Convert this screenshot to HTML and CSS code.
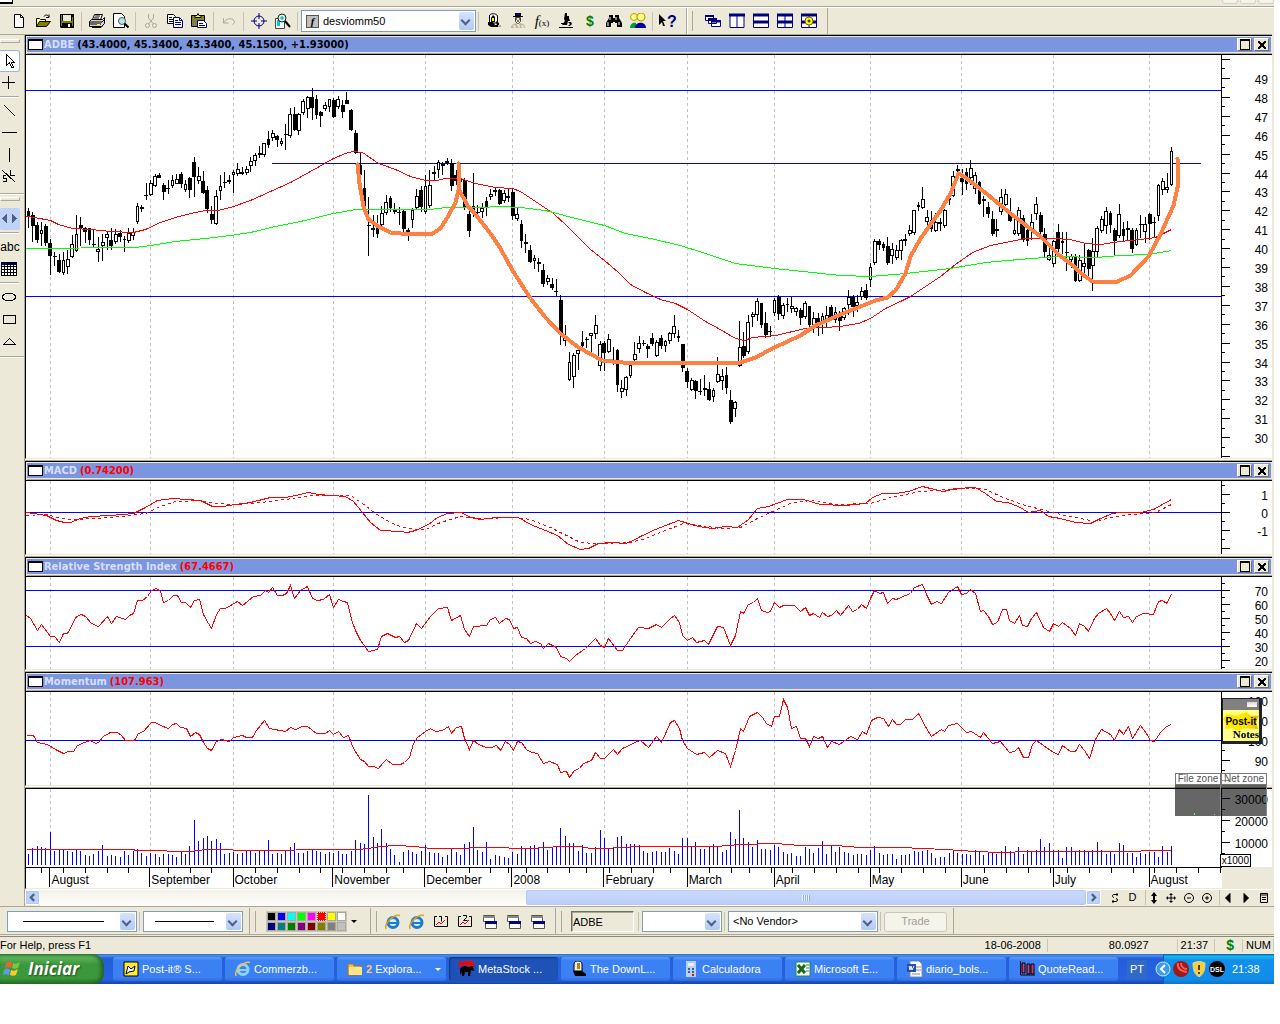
FILE: index.html
```html
<!DOCTYPE html>
<html lang="en">
<head>
    <meta charset="UTF-8">
    <meta name="viewport" content="width=device-width, initial-scale=1.0">
    <title>MetaStock - ADBE</title>
    <link rel="stylesheet" href="styles.css">
</head>
<body>
    <div class="app">
        <div class="menubar">
            <span class="menu-icon"></span>
            <span class="menu-controls"><i></i><i></i><i></i></span>
        </div>

        <header class="toolbar">
            <div class="tools">
                <button class="tool" aria-label="New"><svg viewBox="0 0 16 16"><path d="M3.5 1.5h6l3 3v10h-9z" fill="#fff" stroke="#000"/><path d="M9.5 1.5v3h3" fill="none" stroke="#000"/></svg></button>
                <button class="tool" aria-label="Open"><svg viewBox="0 0 16 16"><path d="M1.5 13.5v-8h3l1 1h5v2" fill="#ffff80" stroke="#000"/><path d="M1.5 13.5l3-5h11l-4 5z" fill="#808000" stroke="#000"/><path d="M9 3.5c1-2 4-2 5 .5m0-2.5v3h-3" fill="none" stroke="#000"/></svg></button>
                <button class="tool" aria-label="Save"><svg viewBox="0 0 16 16"><path d="M1 1h14v14H2l-1-1z"/><path d="M2 2h1v11H2zM13 4h1v9h-1z" fill="#808000"/><path d="M4 2h8v6H4z" fill="#ece9d8"/><path d="M3 8h10v2H3z" fill="#808000"/><path d="M9 11h2v3H9z" fill="#fff"/></svg></button>
                <span class="sep"></span>
                <button class="tool" aria-label="Print"><svg viewBox="0 0 16 16"><path d="M5.5 1.5h8l-2 5h-8z" fill="#fff" stroke="#000"/><path d="M6 3h5M5 5h5" stroke="#000"/><path d="M.5 8.5l2-2h11l2-2v6l-3 3H.5z" fill="#d4d0c8" stroke="#000"/><path d="M1 9h12l2-2M1 11h11M3 14.5h9l2-2" fill="none" stroke="#000"/><path d="M8 11h3v1H8z" fill="#ff0"/></svg></button>
                <button class="tool" aria-label="Print preview"><svg viewBox="0 0 16 16"><path d="M.5.5h8l3 3v11h-11z" fill="#fff" stroke="#000"/><circle cx="9" cy="8" r="3.5" fill="#b0e8e8" stroke="#555"/><path d="M11.5 10.5l4 4" stroke="#000" stroke-width="2"/></svg></button>
                <span class="sep"></span>
                <button class="tool" aria-label="Cut" disabled><svg viewBox="0 0 16 16" fill="none" stroke="#aca899"><path d="M5.5 1v4l5 6M10.5 1v4l-5 6"/><circle cx="4.5" cy="12.5" r="2"/><circle cx="11.5" cy="12.5" r="2"/></svg></button>
                <button class="tool" aria-label="Copy"><svg viewBox="0 0 16 16"><path d="M.5 1.5h6l2 2v7h-8z" fill="#fff" stroke="#000"/><path d="M2 4.5h3M2 6.5h4M2 8.5h4" stroke="#000"/><path d="M6.5 4.5h6l3 3v7h-9z" fill="#fff" stroke="#000080"/><path d="M8 7.5h3M8 9.5h6M8 11.5h6M12.5 5v2.5H15" fill="none" stroke="#000080"/></svg></button>
                <button class="tool" aria-label="Paste"><svg viewBox="0 0 16 16"><path d="M.5 2.5h13v11H.5z" fill="#808040" stroke="#000"/><path d="M4 4.5v-2h2l1-2 1 2h2v2z" fill="#ff0" stroke="#000"/><path d="M6.5 7.5h6l3 3v4h-9z" fill="#fff" stroke="#000080"/><path d="M8 10.5h4M8 12.5h6" stroke="#000080"/></svg></button>
                <span class="sep"></span>
                <button class="tool" aria-label="Undo" disabled><svg viewBox="0 0 16 16" fill="none" stroke="#aca899"><path d="M2.5 5v5h5M3 9.5c2-4 7-5 10-2 1 2 0 3-1.500 4"/></svg></button>
                <span class="sep"></span>
                <button class="tool" aria-label="Crosshair"><svg viewBox="0 0 16 16" fill="none"><circle cx="8" cy="8" r="5" stroke="#000080"/><path d="M8 0v6M8 10v6M0 8h6M10 8h6" stroke="#000080"/></svg></button>
                <button class="tool" aria-label="Zoom"><svg viewBox="0 0 16 16"><path d="M.5 5.5h9v10h-9z" fill="#fff" stroke="#444"/><path d="M2 7h3v6H2z" fill="#0cc"/><circle cx="7" cy="5" r="4" fill="#d0f4f4" stroke="#222"/><path d="M5 5h4M7 3v4" stroke="#0aa"/><path d="M10 8l5 6" stroke="#000" stroke-width="2"/></svg></button>
                <span class="sep"></span>
                <label class="combo indicator">
                    <span class="fx">f</span>
                    <select aria-label="Indicator"><option>desviomm50</option></select>
                </label>
                <span class="sep"></span>
                <button class="tool" aria-label="Downloader"><svg viewBox="0 0 16 16"><path d="M3.5 10V3c0-3 7-3 8 0v7z" fill="#fff" stroke="#000"/><path d="M7 2l2 2v5H5V5z"/><path d="M6 5h2v3H6z" fill="#ff0"/><path d="M2 9h5l2 3h4v2H5l-3-2z"/><path d="M10 8l3 2v3h-2z"/><path d="M12 12h3v2h-3z" fill="#aca899"/></svg></button>
                <button class="tool" aria-label="Expert advisor"><svg viewBox="0 0 16 16"><path d="M5 0h6v3h2v1H3V3h2z"/><path d="M6 1h4v1H6z" fill="#00a"/><path d="M5.5 4.5h5v4l-2 2h-1l-2-2z" fill="#ffe8b0" stroke="#444"/><path d="M6 6h1M9 6h1M7 8h2" stroke="#000"/><path d="M1 15c0-4 3-4 5-5l2 2 2-2c3 1 5 1 5 5z" fill="#bbb79f"/><path d="M3 13h2v2M11 13h2v2M7 12h2v3" fill="none" stroke="#fff"/></svg></button>
                <button class="tool formula" aria-label="Indicator builder"><i>f</i><small>(x)</small></button>
                <button class="tool" aria-label="Explorer"><svg viewBox="0 0 16 16"><path d="M7 0h2v3h2v2l1 3h-2l-1 4H4l3-4-1-2z"/><path d="M3 10h6v1H3zM1 14h14v1H1zM10 9h3l1 2-2 2h-2l2-2z"/></svg></button>
                <button class="tool dollar" aria-label="Quotes">$</button>
                <button class="tool" aria-label="Find"><svg viewBox="0 0 16 16"><path d="M3 2h4v3h2V2h4v3l3 5v4h-5v-4H9V9H7v1H5v4H0v-4l3-5z"/><path d="M4 4v3M2 9v4M10 4v3M13 9v3" stroke="#fff"/></svg></button>
                <button class="tool" aria-label="Community"><svg viewBox="0 0 16 16"><circle cx="4" cy="4" r="3.5" fill="#ffff80" stroke="#b0a000"/><circle cx="11" cy="4" r="4" fill="#ffff80" stroke="#b0a000"/><path d="M0 15c0-5 4-6 6-5v5z" fill="#00a030"/><path d="M5 15c0-7 11-7 11 0z" fill="#0000a0"/></svg></button>
                <span class="sep"></span>
                <button class="tool help" aria-label="Context help"><svg viewBox="0 0 8 16"><path d="M0 1l7 7H4l2 5H4L3 9l-3 3z"/></svg>?</button>
            </div>
            <div class="tools windows">
                <button class="tool" aria-label="Cascade"><svg viewBox="0 0 16 16" fill="#fff" stroke="#000080"><path d="M.5 2.5h8v5h-8zM3.5 5.5h8v5h-8zM6.5 7.5h9v6h-9z"/><path d="M0 3h9M3 6h9M6 8.500h10" stroke-width="2"/></svg></button>
                <button class="tool" aria-label="Tile columns"><svg viewBox="0 0 16 16" fill="#fff" stroke="#000080"><path d="M1 1.5h14v13H1zM8 2v12"/><path d="M0 2h16" stroke-width="3"/></svg></button>
                <button class="tool" aria-label="Tile rows"><svg viewBox="0 0 16 16" fill="#fff" stroke="#000080"><path d="M.5 1.5h15v13H.5z"/><path d="M0 2h16M0 9h16" stroke-width="3"/></svg></button>
                <button class="tool" aria-label="Tile grid"><svg viewBox="0 0 16 16" fill="#fff" stroke="#000080"><path d="M.5 1.5h15v13H.5zM8 2v12"/><path d="M0 2h16M0 9h16" stroke-width="3"/></svg></button>
                <button class="tool" aria-label="Layout settings"><svg viewBox="0 0 16 16" fill="#fff" stroke="#000080"><path d="M.5 1.5h15v13H.5zM8 2v12"/><path d="M0 2h16M0 9h16" stroke-width="3"/><circle cx="8" cy="8" r="4" fill="#ff0" stroke="#806000"/><circle cx="8" cy="8" r="1" fill="#fff" stroke="#000"/></svg></button>
            </div>
        </header>

        <div class="workspace">
            <aside class="palette">
                <span class="palette-grip"></span>
                <button class="draw active" aria-label="Pointer"><svg viewBox="0 0 20 20"><path d="M6.5 3.5v11l3-3 2 5h2l-2-5h3z" fill="#fff" stroke="#000"/></svg></button>
                <button class="draw" aria-label="Crosshair"><svg viewBox="0 0 20 20"><path d="M2 9.5h13M8.500 3v13"/></svg></button>
                <hr>
                <button class="draw" aria-label="Trendline"><svg viewBox="0 0 20 20"><path d="M4 4l11 11"/></svg></button>
                <button class="draw" aria-label="Horizontal line"><svg viewBox="0 0 20 20"><path d="M2 9.5h15"/></svg></button>
                <button class="draw" aria-label="Vertical line"><svg viewBox="0 0 20 20"><path d="M9.5 3v14"/></svg></button>
                <button class="draw" aria-label="Speed lines"><svg viewBox="0 0 20 20"><path d="M2 3l13 12M10.5 3v5h4M6 8.5H3.500v3h3v3H3"/></svg></button>
                <hr class="wide">
                <span class="palette-grip"></span>
                <button class="draw scroll-mode" aria-label="Scroll"><svg viewBox="0 0 20 20"><path d="M7 5v9L2 9.500zM12 5v9l5-4.500z" fill="#4d6185" stroke="none"/></svg></button>
                <hr>
                <button class="draw" aria-label="Text">abc</button>
                <button class="draw" aria-label="Grid"><svg viewBox="0 0 20 20"><path d="M1.5 3.5h15v13h-15z" fill="#fff"/><path d="M1 4.5h16" stroke="#000080" stroke-width="2"/><path d="M4.5 4v13M7.5 4v13M10.5 4v13M13.5 4v13M1 7.5h16M1 10.5h16M1 13.5h16"/></svg></button>
                <hr>
                <button class="draw" aria-label="Ellipse"><svg viewBox="0 0 20 20"><ellipse cx="9" cy="10" rx="6.5" ry="4"/></svg></button>
                <button class="draw" aria-label="Rectangle"><svg viewBox="0 0 20 20"><path d="M3.5 6.5h12v8h-12z"/></svg></button>
                <button class="draw" aria-label="Triangle"><svg viewBox="0 0 20 20"><path d="M3.5 13.5l6-6 6 6z"/></svg></button>
                <hr class="wide last">
            </aside>

            <main class="charts">
                <section class="panel">
                    <h2 class="panel-title"><span class="win-icon"></span><span>ADBE</span><b class="ohlc">(43.4000, 45.3400, 43.3400, 45.1500, +1.93000)</b><button class="max" aria-label="Maximize"></button><button class="close" aria-label="Close"></button></h2>
                    <div class="panel-body price">
                        <svg class="plot" id="price-plot" viewBox="26 55 1195 403" preserveAspectRatio="none"></svg>
                        <svg class="axis" id="price-axis" viewBox="1221 55 51 403"></svg>
                    </div>
                </section>
                <section class="panel">
                    <h2 class="panel-title"><span class="win-icon"></span><span>MACD</span><b>(0.74200)</b><button class="max" aria-label="Maximize"></button><button class="close" aria-label="Close"></button></h2>
                    <div class="panel-body macd">
                        <svg class="plot" id="macd-plot" viewBox="26 481 1195 73" preserveAspectRatio="none"></svg>
                        <svg class="axis" id="macd-axis" viewBox="1221 481 51 73"></svg>
                    </div>
                </section>
                <section class="panel">
                    <h2 class="panel-title"><span class="win-icon"></span><span>Relative Strength Index</span><b>(67.4667)</b><button class="max" aria-label="Maximize"></button><button class="close" aria-label="Close"></button></h2>
                    <div class="panel-body rsi">
                        <svg class="plot" id="rsi-plot" viewBox="26 577 1195 92" preserveAspectRatio="none"></svg>
                        <svg class="axis" id="rsi-axis" viewBox="1221 577 51 92"></svg>
                    </div>
                </section>
                <section class="panel">
                    <h2 class="panel-title"><span class="win-icon"></span><span>Momentum</span><b>(107.963)</b><button class="max" aria-label="Maximize"></button><button class="close" aria-label="Close"></button></h2>
                    <div class="panel-body momentum">
                        <svg class="plot" id="mom-plot" viewBox="26 692 1195 93" preserveAspectRatio="none"></svg>
                        <svg class="axis" id="mom-axis" viewBox="1221 692 51 93"></svg>
                    </div>
                </section>
                <section class="panel untitled">
                    <div class="panel-body volume">
                        <svg class="plot" id="vol-plot" viewBox="26 789 1195 78" preserveAspectRatio="none"></svg>
                        <svg class="axis" id="vol-axis" viewBox="1221 789 51 78"></svg>
                        <span class="multiplier">x1000</span>
                    </div>
                </section>
                <div class="dates">
                    <svg class="date-ticks" id="date-ticks" viewBox="26 868 1195 5" preserveAspectRatio="none"></svg>
                    <div class="months" id="months"></div>
                </div>
                <div class="scroll-row">
                    <button class="arrow" aria-label="Scroll left"><svg viewBox="0 0 8 8"><path d="M5.5 1l-3 3 3 3"/></svg></button>
                    <div class="track"><div class="thumb"><i></i></div></div>
                    <button class="arrow" aria-label="Scroll right"><svg viewBox="0 0 8 8"><path d="M2.5 1l3 3-3 3"/></svg></button>
                    <div class="chart-tools">
                        <button class="mini" aria-label="Refresh"><svg viewBox="0 0 12 12"><path d="M9 2.5H5c-2 0-2 3 0 3M3 9.5h4c2 0 2-3 0-3M8 1v3M4 8v3"/></svg></button>
                        <button class="mini" aria-label="Daily">D</button>
                        <button class="mini split" aria-label="Fit vertically"><svg viewBox="0 0 12 12"><path d="M6 0l3 4H7v4h2l-3 4-3-4h2V4H3z" fill="#000" stroke="none"/></svg></button>
                        <button class="mini" aria-label="Move"><svg viewBox="0 0 12 12"><path d="M6 1v10M1 6h10M4.5 2.5h3M4.5 9.5h3M2.5 4.5v3M9.5 4.5v3"/></svg></button>
                        <button class="mini" aria-label="Zoom out"><svg viewBox="0 0 12 12"><circle cx="6" cy="6" r="4.5"/><path d="M4 6h4"/></svg></button>
                        <button class="mini" aria-label="Zoom in"><svg viewBox="0 0 12 12"><circle cx="6" cy="6" r="4.5"/><path d="M4 6h4M6 4v4"/></svg></button>
                        <button class="mini split" aria-label="Previous"><svg viewBox="0 0 12 12"><path d="M8 1.5v9L3.5 6z" fill="#000"/></svg></button>
                        <button class="mini" aria-label="Next"><svg viewBox="0 0 12 12"><path d="M4 1.5v9L8.500 6z" fill="#000"/></svg></button>
                        <button class="mini" aria-label="Properties"><svg viewBox="0 0 12 12"><path d="M2.5 1.5h7v9h-7zM2 3h8M4 5.5h4M4 7.5h4"/></svg></button>
                    </div>
                </div>
            </main>

            <div class="postit"><span class="postit-bar"></span><span class="postit-logo">Post-it</span><em>Notes</em></div>
            <div class="zones"><span>File zone</span><span>Net zone</span><div class="traffic"></div><div></div></div>
        </div>

        <div class="toolbar bottom">
            <label class="combo style-combo"><select aria-label="Line style"><option></option></select></label>
            <span class="sep"></span>
            <label class="combo weight-combo"><select aria-label="Line weight"><option></option></select></label>
            <div class="group colors">
                <div class="swatches" id="swatches"></div>
                <button class="more" aria-label="More colors"></button>
            </div>
            <div class="group links">
                <button class="tool" aria-label="Web"><svg viewBox="0 0 16 16"><circle cx="8" cy="8.5" r="5" fill="#d8ecfc" stroke="#1c7cd0" stroke-width="3"/><path d="M4 9h10" stroke="#1c7cd0" stroke-width="2"/><path d="M1 15C-1 10 8 0 15 1.5" fill="none" stroke="#e0a020" stroke-width="1.5"/></svg></button>
                <button class="tool" aria-label="Web research"><svg viewBox="0 0 16 16"><circle cx="8" cy="8.5" r="5" fill="#d8ecfc" stroke="#1c7cd0" stroke-width="3"/><path d="M4 9h10" stroke="#1c7cd0" stroke-width="2"/><path d="M1 15C-1 10 8 0 15 1.5" fill="none" stroke="#e0a020" stroke-width="1.5"/></svg></button>
                <button class="tool" aria-label="Chart 1"><svg viewBox="0 0 16 16" fill="none" stroke="#000"><path d="M4 2.5H1.5v10h13v-10H12"/><path d="M3 11l3-3 2 2 4-4" stroke="red"/><path d="M6 2.5h2.500v5"/></svg></button>
                <button class="tool" aria-label="Chart 2"><svg viewBox="0 0 16 16" fill="none" stroke="#000"><path d="M4 2.5H1.5v10h13v-10H12"/><path d="M3 11l3-3 2 2 4-4" stroke="red"/><path d="M6 1.5h3.5v2l-3 3h4"/></svg></button>
                <button class="tool" aria-label="Window 1"><svg viewBox="0 0 16 16"><path d="M2.5 1.5h11v6h-11zM4.5 7.5h11v7h-11z" fill="#fff" stroke="#555"/><path d="M2 2h12v2H2z" fill="#888"/><path d="M4 7h12v3H4z" fill="#000080"/></svg></button>
                <button class="tool" aria-label="Window 2"><svg viewBox="0 0 16 16"><path d="M2.5 1.5h11v6h-11zM4.5 7.5h11v7h-11z" fill="#fff" stroke="#555"/><path d="M2 2h12v2H2z" fill="#888"/><path d="M4 7h12v3H4z" fill="#000080"/></svg></button>
                <button class="tool" aria-label="Window 3"><svg viewBox="0 0 16 16"><path d="M2.5 1.5h11v6h-11zM4.5 7.5h11v7h-11z" fill="#fff" stroke="#555"/><path d="M2 2h12v2H2z" fill="#888"/><path d="M4 7h12v3H4z" fill="#000080"/></svg></button>
            </div>
            <div class="group trading">
                <input class="symbol" type="text" value="ADBE" aria-label="Symbol">
                <span class="sep"></span>
                <label class="combo account"><select aria-label="Account"><option></option></select></label>
                <span class="sep"></span>
                <label class="combo vendor"><select aria-label="Vendor"><option>&lt;No Vendor&gt;</option></select></label>
                <span class="sep"></span>
                <button class="trade" disabled>Trade</button>
            </div>
        </div>

        <footer class="status">
            <span class="hint">For Help, press F1</span>
            <span class="date">18-06-2008</span>
            <span class="value">80.0927</span>
            <span class="time">21:37</span>
            <span class="cash">$</span>
            <span class="num">NUM</span>
        </footer>

        <nav class="taskbar">
            <button class="start"><svg viewBox="0 0 20 20"><path d="M3 4c2-2 4-2 6 0L8 9C6 8 4 8 2 9z" fill="#f0602c"/><path d="M10 4c2 1 4 1 7-1l-2 6c-2 1-4 1-6 0z" fill="#7cc83c"/><path d="M1 11c2-2 4-2 6 0l-1 5c-2-1-4-1-6 0z" fill="#5c9cf0"/><path d="M8 11c2 1 4 1 7-1l-2 6c-2 1-4 1-6 0z" fill="#fcc82c"/></svg>Iniciar</button>
            <div class="tasks">
                <a href="#"><svg viewBox="0 0 16 16"><path d="M1 1h14v14H1z" fill="#fe3" stroke="#000"/><path d="M3 13l2-8 3 3 4-3-1 5-5 1z" fill="#fff" stroke="#000"/></svg>Post-it® S...</a>
                <a href="#"><svg viewBox="0 0 16 16"><circle cx="8" cy="8.5" r="5" fill="none" stroke="#8cd4ff" stroke-width="3"/><path d="M4 9h10" stroke="#8cd4ff" stroke-width="2"/><path d="M1 15C-1 10 8 0 15 1.5" fill="none" stroke="#f4c040" stroke-width="1.5"/></svg>Commerzb...</a>
                <a href="#" class="grouped"><svg viewBox="0 0 16 16"><path d="M1 3h5l1 2h7v9H1z" fill="#f0c050" stroke="#a07820"/><path d="M2 6h13v8H2z" fill="#ffe48a"/></svg><b>2</b> Explora...</a>
                <a href="#" class="current"><svg viewBox="0 0 16 16"><path d="M1 6V0l3 4 3-4v6M14 1H9v2h5v3H9" fill="none" stroke="red" stroke-width="2"/><path d="M1 8c3-4 6-3 8-2l5-1 1 5-3-1-1 6h-2v-4H6l-1 4H3v-4l-2 3z"/></svg>MetaStock ...</a>
                <a href="#"><svg viewBox="0 0 16 16"><path d="M3 10V3c0-4 8-4 8 0v7z" fill="#eee" stroke="#000"/><path d="M6 2h3v6H6z" fill="#a80"/><path d="M2 10h9l4 3v2H4z"/></svg>The DownL...</a>
                <a href="#"><svg viewBox="0 0 16 16"><path d="M3 0h10v16H3z" fill="#b8d0f0"/><path d="M5 2h6v3H5z" fill="#eef"/><path d="M5 7h2v2H5zM9 7h2v2H9zM5 10h2v2H5zM9 10h2v2H9z" fill="#3060a0"/><path d="M9 13h2v2H9z" fill="red"/></svg>Calculadora</a>
                <a href="#"><svg viewBox="0 0 16 16"><path d="M1 1h14v14H1z" fill="#fff" stroke="#284"/><path d="M3 4l7 8M10 4l-7 8" stroke="#186818" stroke-width="3"/><path d="M11 4h3M11 7h3M11 10h3" stroke="#284"/></svg>Microsoft E...</a>
                <a href="#"><svg viewBox="0 0 16 16"><path d="M3 0h9l3 3v13H3z" fill="#fff" stroke="#88a"/><path d="M8 6h6M8 9h6M5 13h8" stroke="#88a"/><path d="M0 3h9v8H0z" fill="#2050a8"/><path d="M2 5l1 4 1-4 1 4 2-4" fill="none" stroke="#fff"/></svg>diario_bols...</a>
                <a href="#"><svg viewBox="0 0 16 16"><path d="M1.5 0v14H16" fill="none" stroke="#000"/><path d="M3 2h3v10H3zM8 3h3v10H8zM12 3h3v10h-3z" fill="#c04080" stroke="#000"/></svg>QuoteRead...</a>
            </div>
            <span class="lang">PT</span>
            <div class="tray">
                <button class="expand" aria-label="Show hidden icons"><svg viewBox="0 0 16 16"><circle cx="8" cy="8" r="7" fill="#3a9cf0" stroke="#cfe6fc"/><path d="M10 4L6 8l4 4" fill="none" stroke="#fff" stroke-width="2"/></svg></button>
                <svg viewBox="0 0 16 16"><circle cx="8" cy="8" r="8" fill="#a01818"/><path d="M5 2c-1 5 2 8 9 9M8 2c0 3 2 6 6 6" fill="none" stroke="#f06050" stroke-width="2"/></svg>
                <svg viewBox="0 0 16 16"><path d="M8 0l6 2c0 6-1 11-6 14C3 13 2 8 2 2z" fill="#fcd030" stroke="#d8d0b0"/><path d="M8 4v5M8 11v2" stroke="#443" stroke-width="2"/></svg>
                <svg class="dsl" viewBox="0 0 16 16"><circle cx="8" cy="8" r="8"/><text x="8" y="11">DSL</text></svg>
                <time>21:38</time>
            </div>
        </nav>
    </div>
    <script src="charts.js"></script>
</body>
</html>
```

FILE: styles.css
```css
* {
    box-sizing: border-box;
}

body {
    margin: 0;
    background: #fff;
    font-family: "Liberation Sans", Arial, sans-serif;
    font-size: 11px;
    line-height: 13px;
    color: #000;
}

button, input, select {
    font: inherit;
    color: inherit;
    padding: 0;
    margin: 0;
    border: 0;
    background: none;
}

.app {
    margin-right: 6px;
    background: #ece9d8;
}

/* menu bar */
.menubar {
    height: 7px;
    display: flex;
    justify-content: space-between;
    align-items: flex-start;
    border-bottom: 1px solid #aca899;
}

.menu-icon {
    width: 13px;
    height: 4px;
    background: #fff;
    border: 1px solid #000;
    border-width: 0 1px 2px 0;
}

.menu-controls {
    display: flex;
    gap: 2px;
}

.menu-controls i {
    width: 16px;
    height: 4px;
    background: #f5f4ea;
    border: 1px solid #d6d2c2;
    border-top: 0;
    border-radius: 0 0 3px 3px;
}

/* toolbars */
.toolbar {
    display: flex;
    height: 27px;
    border-top: 1px solid #fff;
}

.tools {
    display: flex;
    align-items: center;
    padding: 0 6px 0 7px;
    border-right: 1px solid #aca899;
}

.windows {
    border-left: 1px solid #fff;
    padding-left: 13px;
    background: linear-gradient(#aca899, #aca899) 4px 3px / 1px 20px no-repeat;
}

.tool {
    width: 24px;
    height: 22px;
    display: flex;
    align-items: center;
    justify-content: center;
}

.tool svg {
    width: 16px;
    height: 16px;
}

.sep {
    width: 6px;
    height: 19px;
    background: linear-gradient(#c5c2b2, #c5c2b2) 2px 0 / 1px 100% no-repeat;
}

.formula {
    font-family: "Liberation Serif", serif;
    font-size: 15px;
}

.formula small {
    font-size: 9px;
    padding-top: 4px;
}

.dollar {
    color: #008000;
    font-weight: bold;
    font-size: 14px;
}

.tool.help {
    color: #000080;
    font-weight: bold;
    font-size: 16px;
}

.help svg {
    width: 8px;
}

.combo {
    position: relative;
    display: flex;
    align-items: center;
    height: 22px;
    background: #fff;
    border: 1px solid #7f9db9;
}

.combo select {
    appearance: none;
    flex: 1;
    min-width: 0;
    height: 100%;
    padding: 0 18px 0 4px;
    outline: 0;
}

.combo::after {
    content: "";
    position: absolute;
    right: 1px;
    top: 1px;
    bottom: 1px;
    width: 15px;
    border-radius: 2px;
    background: linear-gradient(#d6e3fe, #b4c8f6);
    pointer-events: none;
}

.combo::before {
    content: "";
    position: absolute;
    z-index: 1;
    right: 6px;
    top: 6px;
    width: 5px;
    height: 5px;
    border: solid #4d6185;
    border-width: 0 2px 2px 0;
    transform: rotate(45deg);
    pointer-events: none;
}

.indicator {
    width: 175px;
    padding-left: 4px;
}

.fx {
    width: 13px;
    height: 13px;
    border: 1px solid #555;
    background: #c0c0c0;
    font: italic bold 11px/11px "Liberation Serif", serif;
    text-align: center;
}

/* workspace */
.workspace {
    position: relative;
    display: flex;
}

.palette {
    width: 24px;
    display: flex;
    flex-direction: column;
    padding-top: 4px;
    border-top: 1px solid #aca899;
}

.palette-grip {
    width: 20px;
    height: 4px;
    margin-bottom: 7px;
    border: 1px solid #fff;
    border-color: #fff #aca899 #aca899 #fff;
}

.palette hr {
    width: 19px;
    margin: 2px 0;
    border: 0;
    border-top: 1px solid #aca899;
    border-bottom: 1px solid #fff;
}

.palette .wide {
    width: 24px;
    margin: 5px 0 2px;
}

.palette .last {
    margin-top: 4px;
}

.draw {
    width: 20px;
    height: 22px;
    font-size: 12px;
}

.draw svg {
    display: block;
    width: 20px;
    height: 20px;
    fill: none;
    stroke: #000;
    shape-rendering: crispEdges;
}

.draw.active {
    background: #fff;
    border: 1px solid #98b5e2;
    border-left: 0;
    border-radius: 0 3px 3px 0;
}

.draw.scroll-mode {
    background: #c1d2f8;
    border-radius: 2px;
}

.charts {
    flex: 1;
    min-width: 0;
    border-left: 1px solid #aca899;
    padding-right: 2px;
}

.panel {
    border-top: 1px solid #aca899;
    border-bottom: 1px solid #fff;
}

.panel-title {
    display: flex;
    align-items: center;
    height: 20px;
    margin: 0;
    padding: 0 3px 1px 2px;
    border: 1px solid #000;
    border-right: 0;
    background: #7b96df;
    box-shadow: inset 0 1px #ece9d8, inset 1px 0 #ece9d8, inset 0 -1px #aca899, inset 0 -2px #ece9d8, inset -1px 0 #ece9d8;
    font: bold 11px/14px "DejaVu Sans Condensed", "Liberation Sans", sans-serif;
    color: #d6dff7;
}

.panel-title b {
    flex: 1;
    margin-left: 3px;
    color: #f00;
}

.panel-title .ohlc {
    color: #000;
}

.win-icon {
    width: 15px;
    height: 11px;
    margin-right: 1px;
    background: #fff;
    border: 1px solid #000;
    border-top-width: 2px;
}

.max, .close {
    width: 15px;
    height: 13px;
    margin-left: 2px;
    background: #ece9d8;
    border: 1px solid;
    border-color: #fff #716f64 #716f64 #fff;
}

.max {
    display: flex;
    justify-content: center;
    align-items: center;
}

.max::after {
    content: "";
    width: 8px;
    height: 8px;
    border: 1px solid #000;
    border-top-width: 2px;
}

.close {
    background:
        linear-gradient(45deg, transparent 42%, #000 42%, #000 58%, transparent 58%) center / 8px 8px no-repeat,
        linear-gradient(-45deg, transparent 42%, #000 42%, #000 58%, transparent 58%) center / 8px 8px no-repeat,
        #ece9d8;
}

.panel-body {
    position: relative;
    display: flex;
    box-sizing: content-box;
    border-left: 1px solid #000;
    border-bottom: 1px solid #ece9d8;
    background: #fff;
}

.price { height: 403px; }
.macd { height: 73px; }
.rsi { height: 92px; }
.momentum { height: 93px; }
.volume { height: 78px; }

.panel.untitled {
    border-bottom: 0;
}

.volume {
    border-top: 1px solid #000;
    border-bottom: 0;
}

.plot {
    flex: 1;
    min-width: 0;
    height: 100%;
    shape-rendering: crispEdges;
}

.axis {
    width: 51px;
    height: 100%;
    shape-rendering: crispEdges;
    font-size: 12px;
    text-anchor: end;
}

.multiplier {
    position: absolute;
    right: 21px;
    bottom: 0;
    padding: 0 1px;
    border: 1px solid #000;
    background: #fff;
    font-size: 10px;
    line-height: 11px;
}

.dates {
    height: 22px;
    margin-right: 50px;
    border-left: 1px solid #000;
    border-top: 1px solid #000;
    border-bottom: 1px solid #ece9d8;
    background: #fff;
}

.date-ticks {
    display: block;
    width: 100%;
    height: 5px;
    margin-bottom: -5px;
    shape-rendering: crispEdges;
}

.months {
    display: flex;
    padding-right: 1px;
}

.months span {
    flex-basis: 0;
    min-width: 0;
    height: 19px;
    padding: 5px 0 0 1px;
    border-left: 1px solid #000;
    font-size: 12px;
    line-height: 14px;
    white-space: nowrap;
}

.months span:first-child {
    padding-left: 0;
    border-left: 0;
}

.scroll-row {
    display: flex;
    height: 17px;
    border-top: 1px solid #fff;
}

.arrow {
    width: 15px;
    height: 15px;
    border: 1px solid #fff;
    border-radius: 2px;
    background: #c1d2f8;
    box-shadow: inset 0 0 0 1px #b4c8f6;
}

.arrow svg {
    display: block;
    width: 9px;
    height: 9px;
    margin: 0 auto;
    fill: none;
    stroke: #4d6185;
    stroke-width: 2;
}

.track {
    flex: 1;
    display: flex;
    justify-content: flex-end;
    height: 16px;
    background: linear-gradient(#f3f1ec, #fefefb);
}

.thumb {
    width: 53.5%;
    height: 15px;
    display: flex;
    align-items: center;
    justify-content: center;
    border: 1px solid #b4c8f6;
    border-radius: 2px;
    background: linear-gradient(#c9d8fc, #bccefa);
}

.thumb i {
    width: 8px;
    height: 6px;
    background: repeating-linear-gradient(90deg, #eef4fe 0 1px, #8cb0f8 1px 2px);
}

.chart-tools {
    display: flex;
    padding-left: 5px;
    width: 171px;
    justify-content: space-between;
}

.mini {
    width: 17px;
    height: 15px;
    font-size: 11px;
}

.mini svg {
    display: block;
    width: 12px;
    height: 12px;
    margin: 0 auto;
    fill: none;
    stroke: #000;
}

.mini.split {
    margin-left: 3px;
    border-left: 1px solid #c5c2b2;
}

/* overlays on the right edge */
.postit {
    position: absolute;
    right: 12px;
    top: 664px;
    width: 40px;
    height: 46px;
    display: flex;
    flex-direction: column;
    align-items: center;
    border: 1px solid #222;
    border-width: 1px 3px 3px 1px;
    background: #ffff8c;
}

.postit-bar {
    align-self: stretch;
    height: 11px;
    background: linear-gradient(#d8d8d8, #fff) 24px 3px / 10px 5px no-repeat #808080;
}

.postit-logo {
    margin-top: 2px;
    width: 36px;
    padding: 4px 0;
    background: linear-gradient(90deg, #ffe800 60%, #f0b800);
    clip-path: polygon(10% 10%, 40% 18%, 65% 0, 75% 18%, 100% 20%, 92% 55%, 98% 90%, 60% 85%, 40% 100%, 25% 85%, 5% 88%, 10% 60%, 0 40%);
    font-weight: bold;
    font-size: 10px;
    line-height: 11px;
    text-align: center;
}

.postit em {
    margin-top: -3px;
    align-self: flex-end;
    font: bold 11px/12px "Liberation Serif", serif;
}

.zones {
    position: absolute;
    right: 7px;
    top: 739px;
    width: 92px;
    display: grid;
    grid-template-columns: 1fr 1fr;
    font-size: 10px;
    line-height: 10px;
    color: #555;
}

.zones span {
    border: 1px solid #777;
    text-align: center;
    white-space: nowrap;
    background: rgba(255, 255, 255, .6);
}

.zones div {
    height: 31px;
    background-color: rgba(0, 0, 0, .6);
    border-right: 1px solid #888;
}

.zones .traffic {
    background-image: linear-gradient(#5f5, #5f5), linear-gradient(#5f5, #5f5);
    background-position: 19px 28px, 39px 29px;
    background-size: 1px 2px, 1px 1px;
    background-repeat: no-repeat;
}

/* bottom toolbar */
.bottom {
    height: 31px;
    padding-left: 7px;
    align-items: center;
    border-top: 1px solid #aca899;
    border-bottom: 1px solid #8a8778;
    box-shadow: inset 0 -1px #ece9d8, inset 0 -2px #aca899;
}

.bottom .combo {
    height: 21px;
}

.style-combo {
    width: 130px;
    background: linear-gradient(#000, #000) 15px 9px / 81px 1px no-repeat #fff;
}

.weight-combo {
    width: 100px;
    background: linear-gradient(#000, #000) 11px 9px / 59px 1px no-repeat #fff;
}

.group {
    display: flex;
    align-items: center;
    height: 27px;
    margin-left: 6px;
    padding-left: 16px;
    border-left: 1px solid #aca899;
    background: linear-gradient(#aca899, #aca899) 5px 3px / 1px 21px no-repeat;
}

.colors {
    width: 121px;
}

.swatches {
    display: grid;
    grid-template-columns: repeat(8, 9px);
    gap: 1px;
    padding: 1px;
    background: #c9c6b8;
}

.swatches button {
    width: 9px;
    height: 9px;
    border: 1px solid #aca899;
}

.swatches .selected {
    border: 1px dotted #fff;
}

.more {
    width: 0;
    margin-left: 4px;
    border: 3px solid transparent;
    border-top-color: #000;
    border-bottom: 0;
}

.links {
    margin-left: 0;
    padding-left: 10px;
    width: 185px;
}

.trading {
    margin-left: 0;
    padding-left: 15px;
    padding-right: 6px;
    border-right: 1px solid #aca899;
}

.symbol {
    width: 63px;
    height: 21px;
    padding-left: 1px;
    border: 1px solid;
    border-color: #716f64 #fff #fff #716f64;
    box-shadow: inset 1px 1px #aca899;
    margin-right: 2px;
}

.account {
    width: 80px;
}

.vendor {
    width: 150px;
}

.trade {
    width: 63px;
    height: 20px;
    border: 1px solid #c9c7ba;
    border-radius: 3px;
    background: #f5f4ea;
    color: #a1a192;
}

/* status bar */
.status {
    display: flex;
    align-items: center;
    height: 17px;
}

.status span {
    padding-right: 6px;
    margin-right: 3px;
    border-right: 1px solid #c9c6b8;
}

.status .hint {
    flex: 1;
    border: 0;
}

.status .value {
    padding-left: 58px;
    padding-right: 28px;
}

.status .cash {
    padding: 0 8px;
    color: #008000;
    font-weight: bold;
    font-size: 14px;
}

.status .num {
    padding-right: 2px;
    margin-right: 0;
}

/* taskbar */
.taskbar {
    display: flex;
    height: 30px;
    align-items: center;
    background: linear-gradient(#3168d5, #4993e6 6%, #245ddb 14%, #2663e0 85%, #1941a5);
    color: #fff;
}

.start {
    width: 104px;
    height: 30px;
    display: flex;
    align-items: center;
    padding-left: 3px;
    gap: 5px;
    border-radius: 0 12px 10px 0;
    background: linear-gradient(#3b8a3b, #5eb45c 10%, #3c973c 35%, #3a9a3a 80%, #2b6e2b);
    box-shadow: inset -3px 0 4px #235f23;
    font: italic bold 17px/20px "Open Sans", "Liberation Sans", sans-serif;
    text-shadow: 1px 1px 2px #1d4d1d;
}

.start svg {
    width: 20px;
    height: 20px;
}

.tasks {
    flex: 1;
    min-width: 0;
    display: grid;
    grid-template-columns: repeat(9, 1fr);
    gap: 3px;
    margin: 0 9px 0 9px;
}

.tasks a {
    display: flex;
    align-items: center;
    gap: 3px;
    min-width: 0;
    height: 24px;
    padding-left: 10px;
    border-radius: 3px;
    background: linear-gradient(#5a9cfb, #3c81f3 15%, #3c81f3 85%, #2f6ade);
    color: #fff;
    text-decoration: none;
    white-space: nowrap;
}

.tasks a.current {
    background: #1e52b7;
    box-shadow: inset 1px 1px 2px #123680;
}

.tasks b {
    color: #ffc67a;
}

.tasks svg, .tray svg {
    flex: none;
    width: 16px;
    height: 16px;
}

.grouped::after {
    content: "";
    margin: 0 5px 0 auto;
    border: 3px solid transparent;
    border-top-color: #fff;
    border-bottom: 0;
}

.lang {
    width: 20px;
    margin-right: 16px;
    padding: 3px 0;
    background: #316ac5;
    text-align: center;
}

.tray {
    display: flex;
    align-items: center;
    gap: 2px;
    width: 111px;
    height: 30px;
    background: linear-gradient(#0c59b9, #18b9f2 8%, #1290e9 20%, #0f8dea 85%, #1570c8);
    border-left: 1px solid #095bc9;
}

.expand {
    width: 16px;
    height: 16px;
    margin-left: -9px;
}

.dsl text {
    fill: #fff;
    font-size: 7px;
    font-weight: bold;
    text-anchor: middle;
}

.tray time {
    margin-left: 5px;
}
```

FILE: charts.js
```js
const LEFT = 26, RIGHT = 1221, FIRST_BAR = 28, LAST_BAR = 1171;
const RED = '#ff0000', BLUE = '#0000ff', GREEN = '#00ff00', ORANGE = '#ff8040';

const months = [
    ['', 26], ['August', 50], ['September', 150], ['October', 233], ['November', 333],
    ['December', 425], ['2008', 512], ['February', 604], ['March', 687], ['April', 774],
    ['May', 870], ['June', 961], ['July', 1053], ['August', 1149]
];

// high, body top, body bottom, low, up day (1) or down day (0)
const candles = `
208 211 216 228 0|212 215 226 242 0|222 225 240 243 0|222 230 234 246 1|224 226 243 246 0|239 243 256 275 0
252 256 257 266 0|254 260 272 273 0|252 260 273 275 1|250 259 267 274 1|235 244 257 258 1|215 234 251 252 1
217 225 228 246 0|227 228 232 243 0|228 228 240 245 0|230 244 245 247 0|237 249 252 262 1|234 242 246 261 1
231 234 238 250 1|228 240 246 250 0|229 234 242 244 1|230 233 237 242 0|236 239 240 252 0|228 233 241 243 1
228 232 236 240 1|203 206 222 224 1|205 207 209 212 0|183 195 196 200 0|180 183 195 196 1|174 176 186 187 1
173 175 178 178 0|183 185 192 200 0|180 188 189 194 0|175 180 186 188 1|174 179 184 184 1|172 174 184 188 0
180 184 190 192 1|177 178 190 198 0|157 162 177 197 0|167 176 181 184 1|171 181 193 194 0|186 190 209 213 0
206 214 220 224 0|190 196 224 225 1|175 186 191 200 1|172 182 183 188 0|175 180 182 184 0|170 172 175 193 1
163 169 174 176 1|167 172 174 175 0|166 169 173 175 1|157 161 166 172 1|153 155 161 166 1|146 153 155 158 0
143 143 155 157 1|131 139 145 148 0|130 133 138 141 1|135 136 140 147 0|138 141 144 146 1|124 134 135 150 0
108 114 136 138 1|107 114 130 131 0|113 114 131 135 1|99 101 113 115 1|96 97 109 118 1|88 97 108 120 0
95 99 115 119 0|111 112 116 127 0|102 105 109 111 1|99 99 107 112 1|98 100 117 118 0|96 99 107 109 1
100 105 112 118 0|92 100 104 104 0|109 110 130 131 0|130 133 153 154 0|152 165 175 177 0|170 188 208 209 0
197 225 226 256 0|215 228 230 237 0|215 226 234 238 0|206 213 225 228 1|195 202 213 215 1|196 198 208 212 0
203 210 212 214 0|207 212 213 225 0|209 211 229 233 0|228 230 236 241 0|208 210 220 228 1|189 196 208 210 1
186 190 207 212 0|175 186 212 214 1|170 185 206 208 1|166 172 174 181 0|160 162 170 178 1|162 164 166 175 1
158 161 163 165 1|159 163 186 191 0|170 175 181 185 0|170 178 182 190 0|178 180 208 210 0|205 214 231 237 0
173 206 214 217 0|205 212 213 217 0|203 208 212 218 1|197 201 207 216 0|189 194 197 200 1|187 190 192 196 1
189 190 204 205 0|190 193 201 203 1|188 196 198 202 0|188 192 216 220 0|207 214 219 221 1|220 224 241 248 0
234 242 244 253 0|245 250 262 263 0|255 258 261 269 1|258 262 264 272 0|264 270 284 287 0|275 278 282 285 1
278 284 288 290 0|279 291 292 296 0|295 300 333 345 0|325 336 341 346 1|352 362 380 381 1|353 355 377 388 1
345 350 354 370 1|331 342 346 350 0|337 339 340 348 0|333 333 336 352 1|315 325 334 339 1|341 344 366 371 1
341 343 353 371 0|334 339 352 353 1|347 360 363 365 1|349 350 385 392 0|380 388 392 398 1|376 377 390 396 1
363 365 376 378 1|342 354 360 361 1|336 343 349 353 1|340 343 344 346 0|344 346 349 358 0|333 338 344 346 0
340 342 356 357 1|335 338 346 349 0|340 341 346 352 1|332 333 341 344 1|315 326 334 338 1|330 336 338 342 1
344 344 368 372 0|368 371 382 388 0|378 380 390 391 1|380 381 391 399 0|379 391 392 395 0|375 388 390 396 1
382 389 400 401 0|388 390 397 402 1|357 374 382 383 1|369 376 381 390 1|367 375 388 394 0|390 400 422 424 0
401 402 409 417 1|321 347 366 367 1|332 346 356 358 0|315 322 352 354 1|312 314 317 327 1|298 301 315 321 1
303 303 325 328 0|312 323 335 338 0|326 331 332 337 0|298 300 313 316 1|295 297 314 320 0|303 305 316 319 1
298 304 305 312 0|297 306 309 313 1|307 308 312 316 1|308 310 318 325 0|301 303 317 319 1|306 306 325 327 0
312 318 325 333 1|313 318 326 336 0|313 316 324 334 1|306 315 320 328 1|305 307 317 320 0|307 312 320 323 1
311 315 321 331 0|307 308 318 320 1|290 297 305 315 1|295 297 307 317 0|295 302 306 312 1|287 291 297 300 1
284 290 298 300 0|263 267 280 287 1|239 241 263 265 1|239 241 245 250 0|242 244 248 251 0|237 246 263 265 0
243 249 256 264 1|245 250 258 260 1|239 240 251 260 1|234 239 241 246 1|225 230 234 236 1|210 210 233 235 1
202 205 207 211 1|187 199 208 209 1|210 217 222 232 1|211 220 229 232 0|213 222 231 232 1|218 222 224 231 0
209 210 226 228 1|194 198 200 205 0|171 176 196 197 1|165 169 171 173 0|169 178 182 195 0|168 172 184 190 0
160 168 178 185 1|172 175 189 194 1|181 182 204 205 0|196 199 201 217 0|202 207 214 218 0|211 219 234 236 0
219 229 231 237 0|189 197 212 215 1|189 194 205 206 1|198 212 221 222 0|218 230 234 235 1|207 210 234 236 1
215 218 240 242 0|225 230 241 246 0|214 222 231 240 1|197 204 214 220 1|212 215 232 238 0|228 234 252 258 0
245 255 260 261 1|240 241 264 267 1|224 232 249 252 0|232 241 243 254 1|232 252 253 271 0|254 256 260 268 1
254 256 281 282 0|255 260 281 282 1|244 263 267 275 1|249 250 269 280 0|238 251 266 291 1|226 228 252 258 1
216 219 231 233 1|207 211 226 234 1|211 213 225 233 0|228 230 241 255 0|204 214 236 238 1|222 229 236 242 0
221 228 230 240 0|228 230 249 253 0|228 230 245 246 1|215 224 225 238 0|217 224 232 243 1|213 214 224 240 0
217 222 223 237 0|184 185 216 221 1|178 181 190 195 1|173 187 190 193 1|147 151 185 186 1
`.trim().split(/[|\n]/).map(row => row.trim().split(' ').map(Number));

const volumes = `
854 848 846 847 848 832 851 850 850 851 852 850 851 855 856 854 851 845 856 855 856 857 851 855 851 849 853 856
853 854 857 854 854 855 857 852 854 846 820 841 838 836 841 839 843 854 853
852 854 853 850 850 853 850 850 840 854 853 854 850 847 843 853 853 851 850 851 852 854 852
853 851 854 854 851 840 843 844 795 837 843 829 843 849 855 862 852 850 852 854 851
845 852 853 853 857 855 849 852 855 844 842 827 850 852 842 859 855 856 857 858
852 854 846 848 846 845 848 842 850 847 846 828 836 843 843 851 845 853 853 847 830
838 849 848 837 836 844 844 844 845 851 853 852 851 852 852 848 851 854 838
838 847 842 849 849 847 844 846 852 850 832 839 810 838 842 847 840 849 849 850
845 847 852 854 853 856 856 847 849 853 848 841 854 846 852 847 852 853 855 854 854 855
850 846 853 855 854 854 859 855 855 854 851 852 851 850 853 858 857 857 853 851 853
854 854 855 850 852 855 853 852 854 851 846 851 853 847 854 850 851 850 839 847 843
850 850 858 847 847 852 850 850 851 850 842 850 854 852 854 843 845 853 853 857 853 854
852 852 857 846 852 846
`.trim().split(/\s+/).map(Number);

const ma50 = '26,216 34,217 50,220 58,224 72,228 90,229 110,231 133,232 145,229 160,222 175,217 190,213 205,210 217,210 230,207 250,200 270,191 290,182 310,171 333,158 345,153 352,151 362,152 378,163 395,169 410,176 425,180 436,180 445,178 460,178 475,183 495,187 512,188 520,191 535,201 553,213 566,225 580,239 590,249 604,260 618,272 630,284 645,292 660,299 675,303 687,309 705,321 718,328 735,338 744,340 752,337 775,335 805,328 840,326 858,323 870,318 885,308 900,301 910,296 925,286 940,276 955,264 972,252 990,245 1010,241 1025,238 1053,238 1070,239 1085,243 1100,244 1120,241 1140,239 1155,237 1165,232 1171,229';
const ma200 = '26,248 135,247 150,245 175,241 205,238 230,235 250,232 275,226 300,221 333,213 355,209 430,209 445,207 480,207 500,206 520,207 545,210 553,212 575,218 604,225 625,233 650,238 680,245 705,253 735,263 774,268 840,275 870,276 905,273 950,268 985,262 1030,258 1060,256 1095,257 1120,255 1148,254 1171,250';
const cup = '357,164 359,183 363,206 368,219 378,226 390,232 400,233 432,233 440,228 448,215 455,202 459,186 458,163 458,188 467,205 475,214 490,233 500,248 512,270 530,298 545,317 560,333 578,347 602,360 622,362 740,362 755,357 774,347 800,335 815,325 840,314 875,300 887,297 895,290 905,273 910,256 920,238 940,210 950,193 958,173 965,177 987,194 1010,213 1040,236 1058,254 1070,263 1082,274 1092,281 1115,282 1130,275 1148,256 1160,234 1173,205 1177,187 1177,158';
const macd = '26,512 33,513 46,515 56,520 64,522 70,522 80,518 90,516 110,515 133,513 145,507 157,500 172,498 200,500 212,506 222,506 235,504 250,502 270,497 285,497 295,495 308,492 318,494 345,496 353,501 362,512 370,522 380,530 400,531 407,532 415,530 428,524 437,517 447,513 461,512 470,517 480,519 495,517 518,517 530,524 545,530 557,535 568,544 580,549 588,548 598,543 612,542 625,543 635,539 640,536 655,529 678,520 698,526 712,528 725,526 737,527 748,519 757,508 768,506 787,499 803,499 820,504 845,505 865,503 872,497 882,493 895,493 908,491 922,486 930,488 943,491 955,488 975,487 985,493 996,501 1007,502 1018,506 1028,512 1040,510 1048,516 1060,518 1075,522 1090,523 1100,518 1112,513 1120,512 1140,512 1153,509 1162,504 1171,499';
const signal = '26,515 46,514 60,518 75,519 95,518 120,516 145,513 160,506 175,501 200,500 215,503 235,504 260,502 285,499 310,495 350,495 362,503 375,513 390,522 402,527 415,529 425,529 440,522 460,516 480,518 515,517 530,519 550,527 570,537 580,542 595,543 630,542 645,538 665,530 683,523 700,525 720,528 740,527 755,519 770,512 790,503 810,500 835,504 870,503 890,497 920,491 945,489 975,488 985,489 1005,498 1025,505 1045,510 1060,514 1080,518 1095,521 1110,517 1130,514 1155,512 1171,504';
const rsi = '26,615 30,618 37,630 41,624 50,636 54,636 59,642 63,633 67,633 76,616 81,614 85,616 91,623 98,626 107,616 111,623 116,616 125,619 129,615 133,613 137,600 142,600 147,596 151,590 156,588 160,591 163,602 168,600 173,595 177,595 181,602 185,602 190,607 194,600 199,599 203,614 208,623 211,628 216,614 220,608 225,608 237,601 242,605 253,596 260,595 265,590 268,592 272,587 277,595 282,595 286,593 290,585 294,598 300,590 307,586 312,598 317,600 323,599 329,594 333,607 338,599 343,601 347,602 351,619 355,630 360,640 368,651 377,649 381,636 387,633 395,637 399,636 404,642 408,640 416,623 421,628 430,616 438,608 447,607 451,620 460,615 464,629 469,636 473,626 486,625 490,619 495,617 499,623 505,618 509,619 513,628 517,627 521,637 526,638 530,643 535,641 540,643 543,648 548,643 556,647 560,656 566,658 569,661 575,655 585,648 595,638 600,645 604,647 608,638 617,650 622,650 630,638 638,627 648,628 656,624 661,627 670,618 674,615 679,622 682,635 687,640 692,637 696,642 704,640 708,644 717,626 723,627 730,645 735,635 740,611 743,613 748,604 753,602 757,598 761,610 767,612 770,611 774,602 779,607 783,605 794,605 800,611 805,607 809,615 813,613 819,617 822,612 827,616 831,615 836,610 840,615 848,605 852,611 857,609 861,604 866,608 870,598 874,590 879,593 883,592 887,603 892,598 896,599 905,595 910,593 914,587 922,584 926,594 931,604 936,601 941,603 948,592 957,586 961,594 966,593 970,589 975,593 980,611 983,610 988,616 992,624 997,622 1002,609 1006,609 1009,620 1014,623 1019,615 1022,625 1027,626 1031,618 1036,612 1043,627 1049,631 1053,623 1058,626 1062,622 1070,628 1075,635 1079,623 1084,626 1088,631 1094,618 1098,613 1106,608 1110,613 1114,620 1119,611 1123,617 1128,616 1132,622 1136,616 1143,613 1153,614 1158,601 1162,600 1166,603 1171,594';
const momentum = '26,735 33,735 37,742 47,744 55,749 63,753 68,751 73,751 77,745 84,742 90,740 95,743 98,742 103,736 110,732 117,732 121,735 125,740 134,740 138,733 143,731 151,722 155,722 160,725 168,728 172,724 176,723 180,727 186,728 190,736 195,732 199,734 203,742 207,748 211,750 216,741 221,739 229,741 233,737 242,735 246,737 252,737 256,730 264,720 269,728 285,731 290,727 295,729 302,726 307,726 316,733 325,733 329,730 333,734 338,731 343,737 348,735 353,748 360,759 364,761 368,766 373,766 378,768 382,763 386,759 392,764 400,764 404,762 409,757 413,743 417,737 425,731 430,728 435,731 442,730 448,726 451,733 456,727 461,726 464,738 469,749 473,740 478,744 486,747 491,747 496,745 500,750 505,741 509,744 513,750 517,741 521,742 526,749 531,752 537,753 543,763 549,761 557,764 560,772 566,771 569,777 574,770 579,768 583,763 591,760 595,752 600,758 604,758 613,749 617,754 622,748 637,741 640,740 648,747 656,736 661,742 670,722 674,720 679,728 682,740 687,748 696,754 704,752 709,757 717,750 725,753 730,766 735,750 740,728 743,731 749,716 757,712 762,717 766,723 771,726 774,716 779,716 783,699 787,707 791,728 796,726 800,738 805,738 809,746 813,736 818,738 822,736 827,747 831,741 839,744 850,736 857,739 862,731 866,734 871,720 877,717 883,718 888,726 892,719 896,724 900,724 905,719 912,719 918,713 926,728 931,736 941,729 944,731 948,725 957,723 966,732 971,731 980,737 983,732 992,743 1000,741 1009,752 1014,751 1018,747 1023,757 1028,757 1032,744 1036,740 1043,745 1053,752 1058,754 1062,745 1070,751 1075,751 1079,744 1084,750 1089,758 1095,739 1101,729 1110,734 1114,740 1119,729 1123,734 1128,726 1132,738 1140,725 1146,733 1150,740 1154,741 1160,732 1166,726 1171,724';
const volumeMa = '26,849 133,849 135,850 165,850 168,851 190,851 205,849 230,849 235,850 357,849 368,848 380,846 395,845 415,846 430,848 465,848 475,847 505,847 512,848 530,848 545,847 560,846 580,846 590,848 605,848 620,847 640,846 715,846 740,844 775,843 800,845 835,845 860,847 900,847 945,849 975,851 1000,852 1030,851 1110,851 1171,850';

function rect(x, y, w, h, fill) {
    return `<rect x="${x}" y="${y}" width="${w}" height="${h}" fill="${fill}"/>`;
}

function curve(points, color, width = 1, extra = '') {
    return `<polyline points="${points}" transform="translate(.5 .5)" fill="none" stroke="${color}" stroke-width="${width}" ${extra}/>`;
}

function level(y, from = LEFT, to = RIGHT) {
    return rect(from, y, to - from, 1, BLUE);
}

function barX(i, count) {
    return FIRST_BAR + i * (LAST_BAR - FIRST_BAR) / (count - 1);
}

function grid(top, bottom) {
    return months.slice(1).map(m =>
        `<path d="M${m[1] + .5} ${top}V${bottom}" stroke="#c0c0c0" stroke-dasharray="3 3"/>`).join('');
}

function drawCandles() {
    return candles.map(([high, top, bottom, low, up], i) => {
        const x = barX(i, candles.length);
        const left = Math.round(x - 1.4), w = Math.round(x + 2.4) - left;
        const h = Math.max(bottom - top, 1);
        let out = rect(Math.round(x), high, 1, low - high, '#000') + rect(left, top, w, h, '#000');
        if (up && h > 2) out += rect(left + 1, top + 1, w - 2, h - 2, '#fff');
        return out;
    }).join('');
}

function axis(id, top, bottom, labels, step) {
    let out = rect(RIGHT, top, 1, bottom - top, '#000');
    labels.forEach(([y, text]) => {
        out += rect(RIGHT, Math.round(y), 9, 1, '#000');
        out += rect(RIGHT, Math.round(y + step / 2), 4, 1, '#000');
        out += `<text x="1268" y="${Math.round(y) + 6}">${text}</text>`;
    });
    document.getElementById(id).innerHTML = out;
}

function plot(id, content) {
    document.getElementById(id).innerHTML = content;
}

plot('price-plot', grid(55, 458) + level(90) + level(296) + level(163, 272, 1201) + drawCandles()
    + curve(ma50, RED) + curve(ma200, GREEN) + curve(cup, ORANGE, 4, 'stroke-linejoin="round" stroke-linecap="round"'));
plot('macd-plot', grid(481, 554) + level(512) + curve(macd, RED) + curve(signal, RED, 1, 'stroke-dasharray="3 3"'));
plot('rsi-plot', grid(577, 669) + level(590) + level(646) + curve(rsi, RED));
plot('mom-plot', grid(692, 785) + level(740) + curve(momentum, RED));
plot('vol-plot', grid(789, 867)
    + volumes.map((y, i) => rect(Math.round(barX(i, volumes.length)), y, 1, 865 - y, BLUE)).join('')
    + curve(volumeMa, RED));

const prices = [[59, '']];
for (let p = 49; p >= 29; p--) prices.push([78 + (49 - p) * 18.9, p > 29 ? p : '']);
axis('price-axis', 55, 458, prices, 18.9);
axis('macd-axis', 481, 554, [[476, ''], [494, 1], [512, 0], [530, -1], [548, '']], 18);
axis('rsi-axis', 577, 669, [[576, ''], [590, 70], [604, 60], [618, 50], [632, 40], [646, 30], [660, 20]], 14);
axis('mom-axis', 692, 785, [[700, 120], [720, 110], [740, 100], [760, 90], [780, '']], 20);
axis('vol-axis', 789, 867, [[798, 30000], [820, 20000], [842, 10000]], 22);

plot('date-ticks', [41, 63, 85, 107, 128, 168, 190, 211, 255, 277, 299, 320, 342, 364, 386, 403, 446, 469, 490, 508,
    526, 547, 569, 586, 609, 630, 652, 669, 708, 730, 748, 770, 791, 813, 835, 857, 878, 900, 922, 944, 983, 1005, 1027,
    1049, 1066, 1088, 1110, 1132, 1153, 1175, 1197, 1219].map(x => rect(x, 868, 1, 5, '#000')).join(''));

document.getElementById('months').innerHTML = months.map(([name, x], i) => {
    const next = i + 1 < months.length ? months[i + 1][1] : RIGHT;
    return `<span style="flex-grow: ${next - x}">${name}</span>`;
}).join('');

document.getElementById('swatches').innerHTML = ['#000000', '#0000ff', '#00ffff', '#00ff00', '#ff00ff', '#ff0000',
    '#ffff00', '#ffffff', '#000080', '#008080', '#008000', '#800080', '#800000', '#808000', '#808080', '#c0c0c0'
].map(c => `<button aria-label="${c}" class="${c === '#ff0000' ? 'selected' : ''}" style="background: ${c}"></button>`).join('');
```
